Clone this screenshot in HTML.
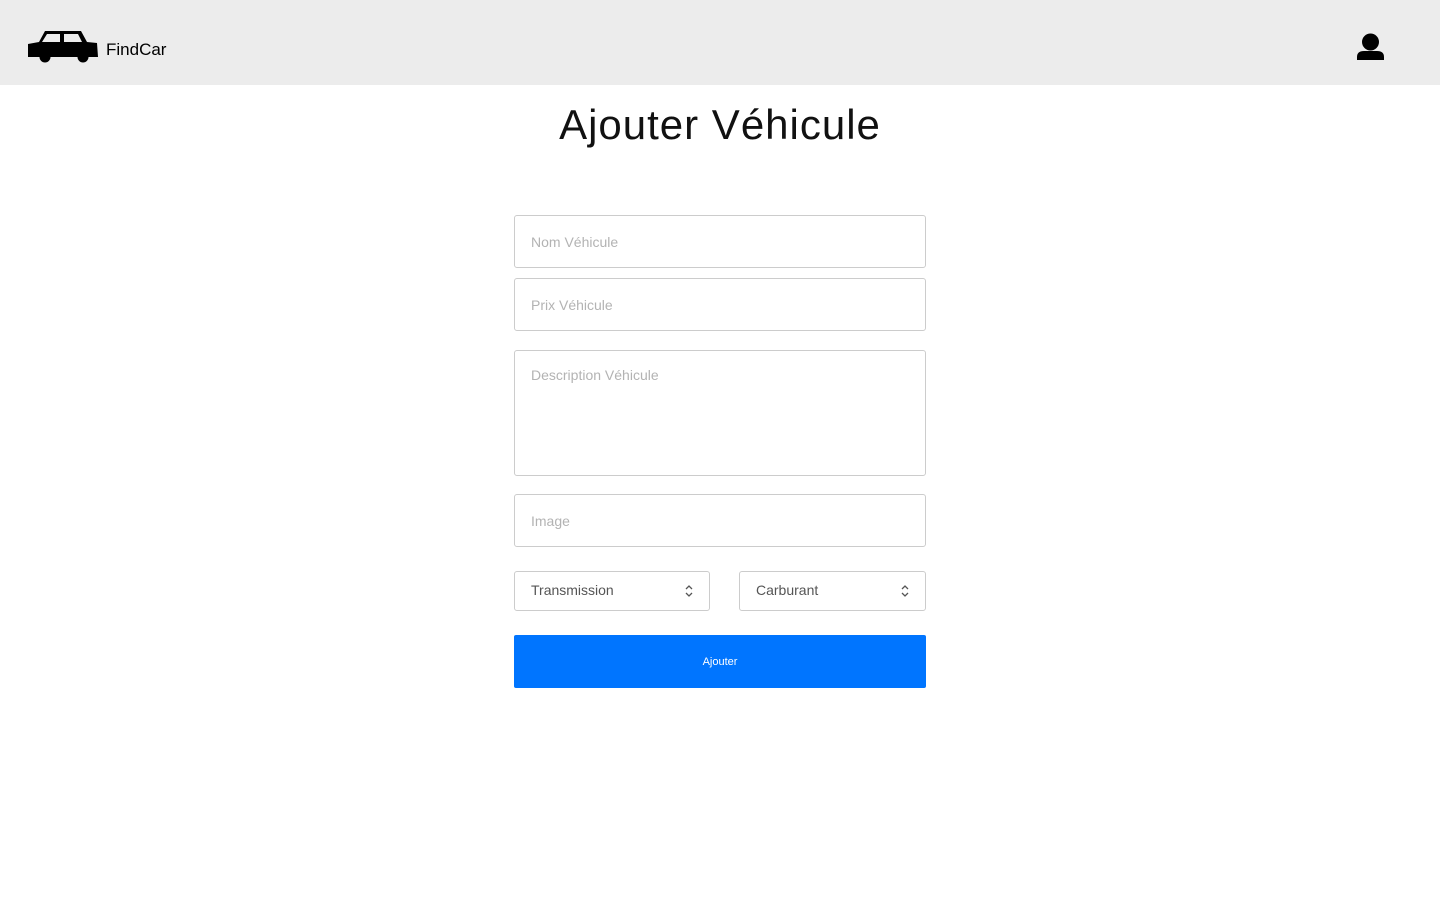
<!DOCTYPE html>
<html><head><meta charset="utf-8"><style>
*{box-sizing:border-box;margin:0;padding:0}
body{width:1440px;height:900px;background:#fff;font-family:"Liberation Sans",sans-serif;position:relative;overflow:hidden}
.nav{position:absolute;left:0;top:0;width:1440px;height:85px;background:#ececec}
.brand{position:absolute;left:106px;top:40px;font-size:17px;color:#000}
h1{position:absolute;top:101px;left:0;width:1440px;text-align:center;font-weight:normal;font-size:42px;color:#111;letter-spacing:1px}
.f{position:absolute;left:514px;width:412px;border:1px solid #ccc;border-radius:3px;font-size:14px;color:#b3b3b3;padding-left:16px}
.s{position:absolute;border:1px solid #ccc;border-radius:3px;font-size:14px;color:#555;padding-left:16px;height:40px;line-height:37px;top:571px}
.s svg{position:absolute;right:16px;top:11px}
.btn{position:absolute;left:514px;top:635px;width:412px;height:53px;background:#0075ff;border-radius:2px;color:#fff;font-size:11px;text-align:center;line-height:55px}
</style></head><body>
<div class="nav">
<svg style="position:absolute;left:27px;top:29px" width="72" height="35" viewBox="0 0 72 35">
<path d="M18 2 L54 2 L60 13 L70 14 L71 28 L1 28 L1 15 L12 13 Z" fill="#000"/>
<path d="M20 5 L33 5 L33 13 L15 13 Z M37 5 L51 5 L55 13 L37 13 Z" fill="#ececec"/>
<circle cx="18" cy="28" r="5.5" fill="#000"/><circle cx="56" cy="28" r="5.5" fill="#000"/>
</svg>
<div class="brand">FindCar</div>
<svg style="position:absolute;left:1356px;top:32px" width="29" height="29" viewBox="0 0 29 29">
<circle cx="14.5" cy="10" r="8.5" fill="#000"/>
<path d="M1 28 L1 25 Q1 19 8 19 L21 19 Q28 19 28 25 L28 28 Z" fill="#000"/>
</svg>
</div>
<h1>Ajouter Véhicule</h1>
<div class="f" style="top:215px;height:53px;line-height:53px">Nom Véhicule</div>
<div class="f" style="top:278px;height:53px;line-height:53px">Prix Véhicule</div>
<div class="f" style="top:350px;height:126px;padding-top:16px">Description Véhicule</div>
<div class="f" style="top:494px;height:53px;line-height:53px">Image</div>
<div class="s" style="left:514px;width:196px">Transmission<svg width="8" height="16" viewBox="0 0 8 16"><path d="M1 6 L4 3 L7 6 M1 10 L4 13 L7 10" stroke="#555" stroke-width="1.3" fill="none"/></svg></div>
<div class="s" style="left:739px;width:187px">Carburant<svg width="8" height="16" viewBox="0 0 8 16"><path d="M1 6 L4 3 L7 6 M1 10 L4 13 L7 10" stroke="#555" stroke-width="1.3" fill="none"/></svg></div>
<div class="btn">Ajouter</div>
</body></html>
